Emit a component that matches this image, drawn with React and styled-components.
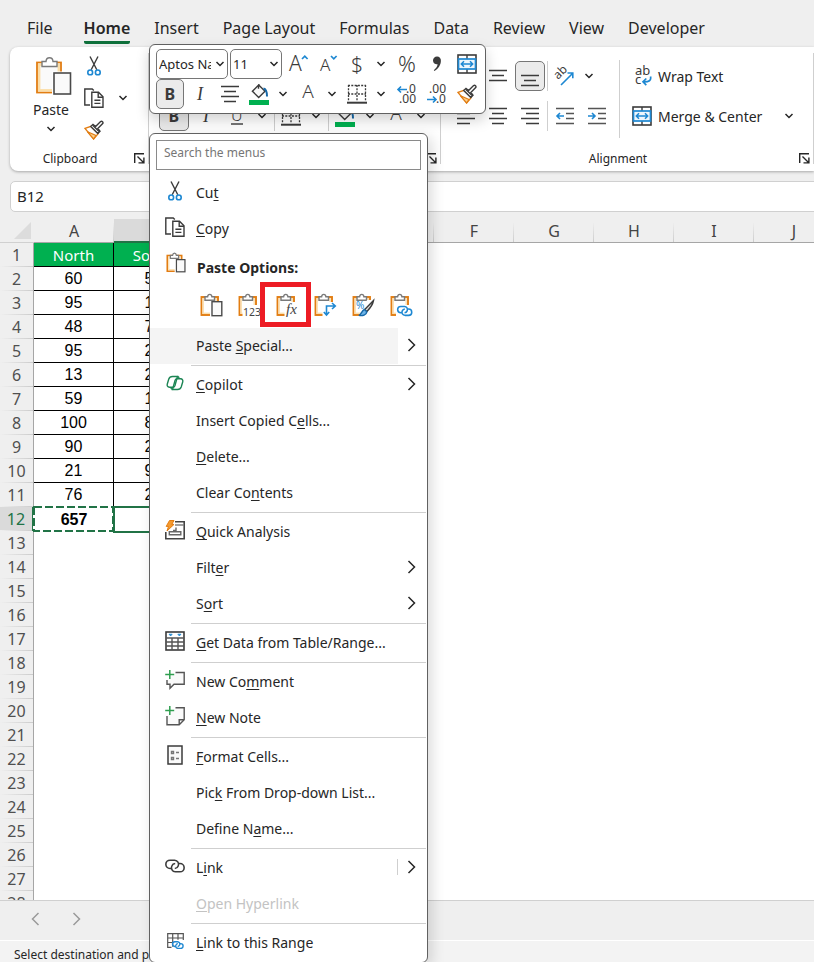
import React from "react";
import styled, { createGlobalStyle, css } from "styled-components";

const ink = "#3b3b3b";
const blue = "#1e88d2";
const orange = "#e27d12";
const green = "#217346";

const GlobalStyle = createGlobalStyle`
  * {
    box-sizing: border-box;
  }
  body {
    margin: 0;
    background: #efefef;
    font-family: "Noto Sans", "Open Sans", sans-serif;
    font-size: 14px;
    color: #262626;
  }
  button, input, select {
    font-family: inherit;
    font-size: inherit;
    color: inherit;
    margin: 0;
  }
  svg {
    display: block;
    flex: none;
  }
`;

const Page = styled.div`
  position: relative;
  display: flex;
  flex-direction: column;
  height: 100vh;
  overflow: hidden;
`;

/* ---------- tabs ---------- */

const TabBar = styled.nav`
  display: flex;
  gap: 24px;
  flex: none;
  height: 47px;
  padding: 12px 0 0 27px;
`;

const Tab = styled.button`
  height: 32px;
  padding: 3px 0 0;
  border: 0;
  border-bottom: 3px solid ${(p) => (p.$active ? "#0f703b" : "transparent")};
  border-radius: 2px;
  background: none;
  font-size: 16px;
  line-height: 26px;
  font-weight: ${(p) => (p.$active ? 600 : 400)};
  white-space: nowrap;
  margin-right: ${(p) => (p.$first ? "7px" : "0")};
`;

/* ---------- ribbon ---------- */

const Ribbon = styled.div`
  display: flex;
  flex: none;
  height: 124px;
  margin-left: 10px;
  background: #fff;
  border-radius: 8px 0 0 8px;
  box-shadow: 0 1px 3px rgba(0, 0, 0, 0.3);
`;

const Group = styled.section`
  display: flex;
  flex-direction: column;
  flex: ${(p) => (p.$grow ? "1" : "none")};
  width: ${(p) => p.$width || "auto"};
  position: relative;
  padding-top: 9px;

  &::after {
    content: "";
    position: absolute;
    right: 0;
    top: 6px;
    bottom: 7px;
    border-right: 1px solid #cfcfcf;
  }
`;

const GroupBody = styled.div`
  display: flex;
  flex: 1;
`;

const GroupFooter = styled.div`
  display: flex;
  align-items: center;
  height: 24px;
  margin-bottom: 1px;
  padding-right: 4px;
  font-size: 12px;

  span {
    flex: 1;
    padding-right: 4px;
    text-align: center;
  }
`;

const Launcher = styled.button`
  padding: 0;
  border: 0;
  background: none;
`;

const IconColumn = styled.div`
  display: flex;
  flex-direction: column;
  align-items: center;
  justify-content: space-between;
  width: ${(p) => p.$width}px;
  height: 84px;
`;

const PasteButton = styled.button`
  display: flex;
  flex-direction: column;
  align-items: center;
  width: 50px;
  margin-left: 16px;
  padding: 0;
  border: 0;
  background: none;
  line-height: 20px;

  span {
    margin: 4px 0 6px;
  }
`;

const ToolRows = styled.div`
  display: flex;
  flex-direction: column;
  padding: 0 7px 0 10px;
`;

const ToolRow = styled.div`
  display: flex;
  align-items: center;
  gap: 2px;
  height: 40px;
`;

const ToolButton = styled.button`
  display: flex;
  align-items: center;
  justify-content: center;
  flex: none;
  width: ${(p) => p.$width || 30}px;
  height: 30px;
  padding: 0;
  border: 1px solid ${(p) => (p.$on ? "#767676" : "transparent")};
  border-radius: 5px;
  background: ${(p) => (p.$on ? "#ebebeb" : "none")};
`;

const Arrow = styled(ToolButton)`
  width: 21px;
`;

const Split = styled.div`
  display: flex;
`;

const Rule = styled.i`
  width: 1px;
  height: ${(p) => p.$height || 30}px;
  background: #cfcfcf;
`;

const LabelButton = styled.button`
  display: flex;
  align-items: center;
  gap: 6px;
  height: 40px;
  padding: 0;
  border: 0;
  background: none;
  white-space: nowrap;
`;

const AlignSide = styled.div`
  display: flex;
  flex-direction: column;
  flex: 1;
  padding: 0 15px 0 12px;
`;

const AlignRow = styled.div`
  display: flex;
  justify-content: space-between;
  align-items: center;
`;

const RuleBox = styled.div`
  padding-top: 4px;
`;

/* ---------- formula bar ---------- */

const FormulaBar = styled.div`
  display: flex;
  flex: none;
  gap: 8px;
  height: 31px;
  margin: 10px 0 7px 10px;
`;

const BarInput = styled.input`
  flex: ${(p) => (p.$grow ? "1" : "none")};
  width: 170px;
  min-width: 0;
  padding: 0 6px 2px;
  border: 1px solid #d0d0d0;
  border-right-width: ${(p) => (p.$grow ? "0" : "1px")};
  border-radius: ${(p) => (p.$grow ? "5px 0 0 5px" : "5px")};
  background: #fff;
  font-size: 15px;
`;

/* ---------- sheet ---------- */

const SheetArea = styled.main`
  flex: 1;
  min-height: 0;
  overflow: hidden;
  background: linear-gradient(#efefef 24px, #fff 24px);
`;

const Sheet = styled.table`
  width: 834px;
  table-layout: fixed;
  border-collapse: separate;
  border-spacing: 0;
  font-size: 16px;
  line-height: 20px;

  th, td {
    height: 24px;
    padding: 0;
    text-align: center;
    font-weight: 400;
  }
  td {
    padding-top: 1px;
  }
  col:first-child {
    width: 34px;
  }
`;

const ColHead = styled.th`
  position: relative;
  color: #444;
  background: ${(p) => (p.$on ? "#dadada" : "#efefef")};
  border-bottom: ${(p) => (p.$on ? `2px solid ${green}` : "1px solid #a6a6a6")};

  &::after {
    content: "";
    position: absolute;
    right: 0;
    top: 3px;
    bottom: 0;
    width: 1px;
    background: linear-gradient(#efefef, #cccccc);
  }
`;

const Corner = styled.th`
  background: #efefef;
  border-bottom: 1px solid #d0d0d0;

  svg {
    margin-left: 14px;
  }
`;

const RowHead = styled.th`
  color: ${(p) => (p.$on ? green : "#505050")};
  background:
    linear-gradient(90deg, #efefef, #cccccc) bottom / 100% 1px no-repeat,
    ${(p) => (p.$on ? "#dadada" : "#efefef")};
  border-right: ${(p) => (p.$on ? `2px solid ${green}` : "1px solid #a6a6a6")};
`;

const Cell = styled.td`
  position: relative;
  color: #000;
  font-family: "Liberation Sans", Arial, sans-serif;

  ${(p) =>
    p.$filled &&
    css`
      border-right: 1px solid #000;
      border-bottom: 1px solid #000;
    `}
  ${(p) =>
    p.$title &&
    css`
      color: #fff;
      background: #00b050;
      font-family: inherit;
      font-size: 15px;
    `}
  ${(p) =>
    p.$total &&
    css`
      && {
        font-weight: 700;
      }
    `}
`;

const Marquee = styled.svg`
  position: absolute;
  left: 0;
  top: 0;
  overflow: visible;
`;

/* ---------- bottom bars ---------- */

const SheetNav = styled.div`
  display: flex;
  flex: none;
  align-items: center;
  gap: 32px;
  height: 40px;
  padding-left: 31px;
  padding-bottom: 4px;
  border-top: 1px solid #d0d0d0;
`;

const PlainButton = styled.button`
  padding: 0;
  border: 0;
  background: none;
`;

const StatusBar = styled.footer`
  flex: none;
  height: 22px;
  padding: 5px 14px 0;
  border-top: 1px solid #fff;
  background: #f3f3f3;
  font-size: 12px;
  line-height: 18px;
  white-space: nowrap;
`;

/* ---------- floating toolbar ---------- */

const MiniBar = styled.div`
  position: absolute;
  left: 149px;
  top: 44px;
  width: 337px;
  height: 70px;
  padding: 4px 6px;
  border: 1px solid #616161;
  border-radius: 6px;
  background: #fff;
  box-shadow: 0 6px 14px rgba(0, 0, 0, 0.18);
`;

const MiniRow = styled.div`
  display: flex;
  gap: 2px;
  height: 30px;
`;

const SelectBox = styled.label`
  position: relative;
  flex: none;
  width: ${(p) => p.$width}px;

  select {
    width: 100%;
    height: 30px;
    padding: 0 16px 0 2px;
    border: 1px solid #767676;
    border-radius: 5px;
    background: #fff;
    appearance: none;
    font-size: 13px;
  }
  svg {
    position: absolute;
    right: 3px;
    top: 12px;
    pointer-events: none;
  }
`;

/* ---------- context menu ---------- */

const Menu = styled.div`
  position: absolute;
  left: 149px;
  top: 133px;
  width: 279px;
  padding: 6px 0 1px;
  border: 1px solid #616161;
  border-radius: 6px;
  background: #fff;
  box-shadow: 4px 4px 14px rgba(0, 0, 0, 0.14);
`;

const Search = styled.input`
  display: block;
  width: calc(100% - 12px);
  height: 30px;
  margin: 0 6px 5px;
  padding: 0 7px 6px;
  border: 1px solid #8a8a8a;
  font-size: 12px;

  &::placeholder {
    color: #767676;
    opacity: 1;
  }
`;

const Item = styled.button`
  display: flex;
  align-items: center;
  width: 100%;
  height: 36px;
  padding: 0 11px 2px;
  border: 0;
  text-align: left;
  color: ${(p) => (p.disabled ? "#c3c3c3" : "inherit")};
  background: ${(p) =>
    p.$hover ? "linear-gradient(90deg, #f4f4f4 248px, #fff 248px)" : "none"};

  u {
    text-underline-offset: 2px;
    text-decoration-skip-ink: none;
  }
`;

const ItemIcon = styled.span`
  display: flex;
  align-items: center;
  justify-content: center;
  width: 28px;
  height: 26px;
  padding-bottom: 2px;
  margin-right: 7px;
`;

const ItemText = styled.span`
  flex: 1;
  white-space: nowrap;
`;

const ItemRule = styled.i`
  width: 1px;
  height: 16px;
  margin-right: 9px;
  background: #cfcfcf;
`;

const Separator = styled.hr`
  height: 1px;
  margin: 1px 1px 1px 41px;
  border: 0;
  background: #cfcfcf;
`;

const PasteHeading = styled.div`
  display: flex;
  height: 37px;
  padding: 3px 12px 0;
  font-weight: 700;
  line-height: 35px;
`;

const PasteOptions = styled.div`
  display: flex;
  height: 44px;
  padding-left: 42px;
`;

const PasteOption = styled.button`
  position: relative;
  display: flex;
  align-items: center;
  justify-content: center;
  width: 38px;
  padding: 0 0 2px;
  border: 0;
  background: none;
`;

const RedBox = styled.i`
  position: absolute;
  inset: -2px -5px 1px -8px;
  border: 5px solid #ed1c24;
`;

/* ---------- icons ---------- */

const Svg = ({ w = 20, h = 20, scale = 1, children }) => (
  <svg
    width={Math.round(w * scale)}
    height={Math.round(h * scale)}
    viewBox={`0 0 ${w} ${h}`}
    fill="none"
    stroke={ink}
    strokeWidth="1.4"
    aria-hidden="true"
  >
    {children}
  </svg>
);

const Glyph = ({ x, y, size, fill = ink, ...rest }) => (
  <text
    x={x}
    y={y}
    fontSize={size}
    fill={fill}
    stroke="none"
    fontFamily="Noto Sans, sans-serif"
    {...rest}
  />
);

const Down = () => (
  <Svg w={10} h={6}>
    <path d="M1.5 1l3.5 3.5L8.5 1" stroke="#262626" strokeWidth="1.5" />
  </Svg>
);

const Right = ({ color = "#262626" }) => (
  <Svg w={9} h={14}>
    <path d="M1.5 1l6 6-6 6" stroke={color} strokeWidth="1.5" />
  </Svg>
);

const Left = () => (
  <Svg w={9} h={14}>
    <path d="M7.5 1l-6 6 6 6" stroke="#9a9a9a" strokeWidth="1.5" />
  </Svg>
);

const LauncherIcon = () => (
  <Svg w={11} h={11}>
    <path d="M.7 10V.7H10M3.5 3.5l6 6M9.9 4.5v5.4H4.5" stroke="#262626" />
  </Svg>
);

const Cut = () => (
  <Svg w={14} h={20}>
    <path d="M3 .5l6.8 13.3M11 .5L4.2 13.8" />
    <circle cx="3.2" cy="16.4" r="2.4" stroke={blue} strokeWidth="1.6" />
    <circle cx="10.8" cy="16.4" r="2.4" stroke={blue} strokeWidth="1.6" />
  </Svg>
);

const Copy = () => (
  <Svg>
    <path d="M6 17H.8V1h7.4l1.6 1.6" />
    <path d="M7.8 4.2h6.7l4.5 4.6v10.4H7.8z" fill="#fff" />
    <path d="M14.2 4.2v5H19M10.4 12.3h6M10.4 15.4h6" />
  </Svg>
);

const Painter = () => (
  <Svg>
    <path d="M1 8.4l6-2 7.200 7.200-4.600 5.400z" fill="#fff" stroke={orange} />
    <path d="M3.500 11.800l8.500 3.700-2.400 3.300z" fill="#fbd28f" stroke={orange} strokeWidth="1.200" />
    <path d="M6.800 6.600L9 4.400l2.600 2.200 5-5c1.400-1 3 .6 2.100 2l-4.900 4.900 2.200 2.700-2.200 2.200z" fill="#fff" />
    <path d="M9 5.400l6 6" />
  </Svg>
);

const BigPaste = () => (
  <Svg w={42} h={40}>
    <g transform="translate(6 0)">
      <rect x="1" y="6.5" width="24" height="30" fill="#fafafa" stroke={orange} strokeWidth="1.8" />
      <rect x="3.200" y="8.700" width="19.600" height="25.600" stroke="#fbdda6" strokeWidth="2.400" />
      <path d="M6 10.500v-5h4c.3-5 6.700-5 7 0h4v5z" fill="#fff" stroke="#7a7a7a" />
      <rect x="16" y="15.500" width="20" height="24.500" fill="#fff" stroke="none" />
      <rect x="18" y="17" width="16.500" height="21" fill="#fafafa" stroke="#4a4a4a" strokeWidth="1.600" />
    </g>
  </Svg>
);

const Board = ({ children, scale, cut = "M10 9h13v15H10z" }) => (
  <Svg w={23} h={24} scale={scale}>
    <rect x="1.5" y="4" width="16.500" height="18" fill="#fff" stroke={orange} strokeWidth="1.900" />
    <rect x="3.200" y="5.700" width="13" height="14.600" stroke="#fbdfaf" strokeWidth="1.400" />
    <path d="M5 7.300V3.800h2.600c.3-3.300 4-3.300 4.300 0h2.600v3.500z" fill="#fff" stroke="#7a7a7a" />
    <path d={cut} fill="#fff" stroke="none" />
    {children}
  </Svg>
);

const PasteAll = ({ scale }) => (
  <Board scale={scale}>
    <rect x="12" y="8.700" width="9.800" height="14" fill="#fafafa" stroke="#4a4a4a" />
  </Board>
);

const PasteValues = () => (
  <Board cut="M4.500 12H23v12H4.500z">
    <Glyph x="5" y="23" size="10.500" fill="#444">123</Glyph>
  </Board>
);

const PasteFormulas = () => (
  <Board cut="M8.500 9H23v15H8.500z">
    <Glyph x="10" y="20.500" size="15" fill="#444" fontFamily="Liberation Serif, serif" fontStyle="italic">fx</Glyph>
  </Board>
);

const PasteTranspose = () => (
  <Board cut="M8.500 9H23v15H8.500z">
    <path d="M12.500 21.500V13h8M18 10l3.300 3-3.300 3M9.800 19l2.700 3 2.700-3" stroke={blue} strokeWidth="1.600" />
  </Board>
);

const PasteFormatting = () => (
  <Board cut="M15 7h8v17H9z">
    <Glyph x="4" y="16" size="10" fill={blue}>%</Glyph>
    <path d="M21.500 7.500l-8.800 9 2 2.200c3-3 6-7 6.800-11.200z" fill="#ddd" />
    <path d="M12.500 16.500l2.300 2.300c-.5 3.500-4 4.200-8 3.600 3-.8 2.400-4.900 5.700-5.900z" fill="#6db4e8" stroke="#1668a8" />
  </Board>
);

// two open loops, the second is the first one turned by 180 degrees
const chain =
  "M6.500 9.500H5A4.100 4.100 0 015 1.200h4.700a4.100 4.100 0 013.500 5.800c-.6 1.500-1.800 2.400-3.400 2.500" +
  "M13.500 4.500H15a4.100 4.100 0 010 8.300h-4.700a4.100 4.100 0 01-3.500-5.800c.6-1.500 1.800-2.400 3.400-2.500";

const PasteLink = () => (
  <Board cut="M6 12h17v12H6z">
    <g transform="translate(7 12.5) scale(.77)">
      <path d={chain} stroke={blue} strokeWidth="2" />
    </g>
  </Board>
);

const Copilot = () => (
  <Svg w={18} h={16}>
    <path d="M6.500 1.500h5l-2.600 9.300c-.4 1-1 1.400-2 1.400H3.500C1.500 12.200.8 10.600 1.300 9l1.500-5c.6-1.800 1.700-2.500 3.700-2.500z" stroke="#1c8554" />
    <path d="M11.500 14.500h-5l2.600-9.300c.4-1 1-1.400 2-1.400h3.400c2 0 2.700 1.600 2.200 3.200l-1.500 5c-.6 1.800-1.700 2.500-3.700 2.500z" stroke="#1c8554" />
    <path d="M11.500 1.500c1 0 1.500.7 1.800 2.300M6.500 14.500c-1 0-1.500-.7-1.800-2.300" stroke="#1c8554" />
  </Svg>
);

const Analysis = () => (
  <Svg>
    <path d="M10 1.800h9.200v16.900H.8V12" stroke="#444" strokeWidth="1.600" />
    <path d="M10 5h9" stroke="#777" />
    <path d="M8 10.500h3V7.500M11 7.500v4.300h4.800v2.900H4.300v-2.900H11" stroke="#666" />
    <path d="M4.500.5H9L6.800 4.400H9L2 11l1.500-4.600H1.200z" fill="#f59a2f" stroke={orange} strokeWidth="1" />
  </Svg>
);

const TableIcon = () => (
  <Svg>
    <rect x="1" y="1" width="18" height="18" fill="#fff" strokeWidth="1.600" />
    <path d="M1 7h18M1 11h18M1 15h18M7 7v12M13 7v12" stroke="#555" />
    <path d="M4 3.200h3.200L5.600 5zM12.800 3.200H16L14.400 5z" fill={blue} stroke={blue} strokeWidth=".8" />
  </Svg>
);

const Comment = () => (
  <Svg>
    <path d="M10.500 2.500h8.700v11.700H9l-4 4v-4H2V10" fill="#fafafa" stroke="#555" />
    <path d="M4.800 0v9M.2 4.500h9" stroke="#2f9e4f" strokeWidth="1.500" />
  </Svg>
);

const Note = () => (
  <Svg>
    <path d="M10.500 1.800h8.700v12l-5 5H2V10" fill="#fafafa" stroke="#555" />
    <path d="M14.200 18.500v-4.800h4.800" stroke="#555" />
    <path d="M4.800 0v9M.2 4.500h9" stroke="#2f9e4f" strokeWidth="1.500" />
  </Svg>
);

const Format = () => (
  <Svg w={16} h={20}>
    <rect x="1" y="1" width="14" height="18" fill="#fafafa" strokeWidth="1.500" />
    <path d="M4.500 6.500h2v2h-2zM4.500 12.500h2v2h-2zM9 7.500h3M9 13.500h3" stroke="#777" />
  </Svg>
);

const LinkIcon = () => (
  <Svg w={20} h={14}>
    <path d={chain} strokeWidth="1.600" />
  </Svg>
);

const RangeLink = () => (
  <Svg w={17} h={16}>
    <path d="M4.500 14.300H.7V.7h15.600V7M.7 5h15.600M.7 9.500h5M5.700.7v13M11 .7v6" stroke="#555" strokeWidth="1.200" />
    <g transform="translate(5 8) scale(.58)">
      <path d={chain} stroke={blue} strokeWidth="2.400" />
    </g>
  </Svg>
);

const Lines = ({ rows, w = 20, h = 20 }) => (
  <Svg w={w} h={h}>
    {rows.map(([x1, x2, y]) => (
      <path key={y} d={`M${x1} ${y}H${x2}`} strokeWidth="1.500" />
    ))}
  </Svg>
);

const topLines = [[1, 19, 1.5], [4, 16, 6.5], [1, 19, 11.5]];
const middleLines = [[1, 19, 4.5], [4, 16, 9.5], [1, 19, 14.5]];
const bottomLines = [[1, 19, 11.5], [4, 16, 16.5], [1, 19, 21.5]];
const centerLines = [[1, 19, 2.5], [4, 16, 7.5], [1, 19, 12.5], [4, 16, 17.5]];
const leftLines = [[1, 19, 2.5], [1, 14, 7.5], [1, 19, 12.5], [1, 14, 17.5]];
const rightLines = [[1, 19, 2.5], [6, 19, 7.5], [1, 19, 12.5], [6, 19, 17.5]];

const Indent = ({ inward }) => (
  <Svg>
    <path d="M1 2.500h18M11 7.500h8M11 12.500h8M1 17.500h18" strokeWidth="1.500" stroke="#555" />
    <path d={inward ? "M1 10h7M5 7l3 3-3 3" : "M9 10H2M5 7l-3 3 3 3"} stroke={blue} strokeWidth="1.600" />
  </Svg>
);

const Bold = () => (
  <Svg>
    <Glyph x="4.500" y="15.500" size="16" fontWeight="700">B</Glyph>
  </Svg>
);

const Italic = () => (
  <Svg>
    <Glyph x="7" y="15.500" size="18" fontFamily="Liberation Serif, serif" fontStyle="italic">I</Glyph>
  </Svg>
);

const Underline = () => (
  <Svg>
    <Glyph x="4" y="15" size="16" fontWeight="300">U</Glyph>
    <path d="M4 18h12" />
  </Svg>
);

const Fill = () => (
  <Svg h={22}>
    <path d="M9.500 1.800l6.500 6.500-6.300 6.200-6.300-6.200 6.500-6.500V1M9.500 1.800v4" fill="#fafafa" />
    <path d="M14.500 5.500c2.600.5 3.500 3 3.500 8" stroke="#1668a8" strokeWidth="2" />
    <rect x="0" y="17" width="20" height="5" fill="#00b050" stroke="none" />
  </Svg>
);

const FontColor = () => (
  <Svg h={22}>
    <Glyph x="10" y="15" size="19" fontWeight="300" textAnchor="middle">A</Glyph>
  </Svg>
);

const Borders = () => (
  <Svg>
    <path d="M1 1.500h18M1 10h18M1.500 1v16M10 1v16M18.500 1v16" strokeDasharray="2 1.300" strokeWidth="1.300" />
    <path d="M0 18.700h20" strokeWidth="2" />
  </Svg>
);

const FontUp = ({ small }) => (
  <Svg w={22} h={22}>
    <Glyph x={small ? 3 : 2} y="18" size={small ? 17 : 21} fontWeight="300">A</Glyph>
    <path d={small ? "M14 3l2.800 2.800L19.600 3" : "M15 6l2.800-2.800L20.600 6"} stroke={blue} strokeWidth="1.700" />
  </Svg>
);

const Sign = ({ children, size = 22 }) => (
  <Svg w={24} h={24}>
    <Glyph x="12" y="19.500" size={size} fontWeight="300" textAnchor="middle">{children}</Glyph>
  </Svg>
);

const Comma = () => (
  <Svg w={12} h={18}>
    <path d="M6 1.500a3.800 3.800 0 013.900 4.200c0 4-2.400 7.800-6.400 10.300l-.7-.8c2.200-1.900 3.500-3.700 3.800-6A3.700 3.700 0 012 5.600 4 4 0 016 1.500z" fill={ink} stroke="none" />
  </Svg>
);

const Merge = () => (
  <Svg>
    <rect x="1" y="1" width="18" height="18" strokeWidth="1.600" />
    <path d="M10 1v4M10 15v4" />
    <rect x="1.500" y="5" width="17" height="10" fill="#eef6fc" stroke={blue} strokeWidth="1.700" />
    <path d="M4.500 10h11M7 7.200L4.300 10 7 12.800M13 7.200l2.700 2.800-2.700 2.800" stroke={blue} strokeWidth="1.500" />
  </Svg>
);

const Decimals = ({ less }) => (
  <Svg w={22} h={22}>
    <Glyph size="12" textAnchor="end">
      <tspan x="20" y="10">{less ? ".00" : ".0"}</tspan>
      <tspan x="20" y="20">{less ? ".0" : ".00"}</tspan>
    </Glyph>
    <path
      d={less ? "M1 16.500h9M7 13.500l3 3-3 3" : "M11 6.500H2M5 3.500l-3 3 3 3"}
      stroke={blue}
      strokeWidth="1.600"
    />
  </Svg>
);

const Orientation = () => (
  <Svg w={22} h={22}>
    <Glyph x="0" y="0" size="12" transform="translate(5 15) rotate(-45)">ab</Glyph>
    <path d="M8 20L19.500 8.500M14.500 8h5.300v5.300" stroke={blue} strokeWidth="1.600" />
  </Svg>
);

const Wrap = () => (
  <Svg w={20} h={22}>
    <Glyph size="13">
      <tspan x="3" y="10">ab</tspan>
      <tspan x="3" y="19">c</tspan>
    </Glyph>
    <path d="M18.500 11.500c1 4-1.500 5.500-7 5.300M14.300 13.500L11 16.800l3.300 3.300" stroke={blue} strokeWidth="1.700" />
  </Svg>
);

/* ---------- data ---------- */

const tabs = ["File", "Home", "Insert", "Page Layout", "Formulas", "Data", "Review", "View", "Developer"];
const columns = ["A", "B", "C", "D", "E", "F", "G", "H", "I", "J"];

const rows = [
  ["North", "South"],
  ["60", "50"],
  ["95", "16"],
  ["48", "74"],
  ["95", "23"],
  ["13", "28"],
  ["59", "17"],
  ["100", "83"],
  ["90", "22"],
  ["21", "96"],
  ["76", "25"],
  ["657", ""],
];

// & marks the access key, "-" is a separator
const menuItems = [
  { label: "&Copilot", icon: <Copilot />, more: true },
  { label: "Insert Copied C&ells..." },
  { label: "&Delete..." },
  { label: "Clear Co&ntents" },
  "-",
  { label: "&Quick Analysis", icon: <Analysis /> },
  { label: "Filt&er", more: true },
  { label: "S&ort", more: true },
  "-",
  { label: "&Get Data from Table/Range...", icon: <TableIcon /> },
  "-",
  { label: "New Co&mment", icon: <Comment /> },
  { label: "&New Note", icon: <Note /> },
  "-",
  { label: "&Format Cells...", icon: <Format /> },
  { label: "Pic&k From Drop-down List..." },
  { label: "Define N&ame..." },
  "-",
  { label: "L&ink", icon: <LinkIcon />, more: true, rule: true },
  { label: "&Open Hyperlink", disabled: true },
  "-",
  { label: "&Link to this Range", icon: <RangeLink /> },
];

const pasteOptions = [
  { name: "Paste", icon: <PasteAll /> },
  { name: "Values", icon: <PasteValues /> },
  { name: "Formulas", icon: <PasteFormulas />, marked: true },
  { name: "Transpose", icon: <PasteTranspose /> },
  { name: "Formatting", icon: <PasteFormatting /> },
  { name: "Paste Link", icon: <PasteLink /> },
];

const AccessLabel = ({ text }) => {
  const at = text.indexOf("&");
  return (
    <ItemText>
      {text.slice(0, at === -1 ? text.length : at)}
      {at !== -1 && <u>{text[at + 1]}</u>}
      {at !== -1 && text.slice(at + 2)}
    </ItemText>
  );
};

const MenuItem = ({ label, icon, more, rule, hover, disabled }) => (
  <Item role="menuitem" $hover={hover} disabled={disabled}>
    <ItemIcon>{icon}</ItemIcon>
    <AccessLabel text={label} />
    {rule && <ItemRule />}
    {more && <Right />}
  </Item>
);

const SplitTool = ({ icon, name, width = 26 }) => (
  <Split>
    <ToolButton $width={width} aria-label={name}>{icon}</ToolButton>
    <Arrow aria-label={`${name} options`}><Down /></Arrow>
  </Split>
);

const ContextMenu = () => (
  <Menu role="menu">
    <Search type="text" aria-label="Search the menus" placeholder="Search the menus" />
    <MenuItem label="Cu&t" icon={<Cut />} />
    <MenuItem label="&Copy" icon={<Copy />} />
    <PasteHeading>
      <ItemIcon><PasteAll scale={0.87} /></ItemIcon>
      Paste Options:
    </PasteHeading>
    <PasteOptions>
      {pasteOptions.map((o) => (
        <PasteOption key={o.name} aria-label={o.name}>
          {o.icon}
          {o.marked && <RedBox />}
        </PasteOption>
      ))}
    </PasteOptions>
    <MenuItem label="Paste &Special..." hover more />
    <Separator />
    {menuItems.map((item, i) =>
      item === "-" ? <Separator key={i} /> : <MenuItem key={i} {...item} />
    )}
  </Menu>
);

const MiniToolbar = () => (
  <MiniBar>
    <MiniRow>
      <SelectBox $width={72}>
        <select aria-label="Font"><option>Aptos Narrow</option></select>
        <Down />
      </SelectBox>
      <SelectBox $width={52}>
        <select aria-label="Font size"><option>11</option></select>
        <Down />
      </SelectBox>
      <ToolButton $width={28} aria-label="Increase font size"><FontUp /></ToolButton>
      <ToolButton $width={28} aria-label="Decrease font size"><FontUp small /></ToolButton>
      <SplitTool name="Currency" icon={<Sign size={21}>$</Sign>} />
      <ToolButton $width={28} aria-label="Percent"><Sign>%</Sign></ToolButton>
      <ToolButton $width={28} aria-label="Comma style"><Comma /></ToolButton>
      <ToolButton $width={28} aria-label="Merge"><Merge /></ToolButton>
    </MiniRow>
    <MiniRow>
      <ToolButton $width={28} $on aria-label="Bold"><Bold /></ToolButton>
      <ToolButton $width={28} aria-label="Italic"><Italic /></ToolButton>
      <ToolButton $width={28} aria-label="Center"><Lines rows={centerLines} /></ToolButton>
      <SplitTool name="Fill" icon={<Fill />} />
      <SplitTool name="Font color" icon={<FontColor />} />
      <SplitTool name="Borders" icon={<Borders />} />
      <ToolButton $width={28} aria-label="More decimals"><Decimals /></ToolButton>
      <ToolButton $width={28} aria-label="Fewer decimals"><Decimals less /></ToolButton>
      <ToolButton $width={28} aria-label="Format painter"><Painter /></ToolButton>
    </MiniRow>
  </MiniBar>
);

const RibbonBar = () => (
  <Ribbon>
    <Group $width="139px">
      <GroupBody>
        <PasteButton>
          <BigPaste />
          <span>Paste</span>
          <Down />
        </PasteButton>
        <IconColumn $width={36}>
          <Cut />
          <Copy />
          <Painter />
        </IconColumn>
        <IconColumn $width={22}>
          <i />
          <Down />
          <i />
        </IconColumn>
      </GroupBody>
      <GroupFooter>
        <span>Clipboard</span>
        <Launcher aria-label="Clipboard settings"><LauncherIcon /></Launcher>
      </GroupFooter>
    </Group>
    <Group $width="292px">
      <GroupBody>
        <ToolRows>
          <ToolRow />
          <ToolRow>
            <ToolButton $on aria-label="Bold"><Bold /></ToolButton>
            <ToolButton aria-label="Italic"><Italic /></ToolButton>
            <SplitTool name="Underline" width={28} icon={<Underline />} />
            <Rule />
            <SplitTool name="Borders" width={28} icon={<Borders />} />
            <Rule />
            <SplitTool name="Fill" width={28} icon={<Fill />} />
            <SplitTool name="Font color" width={28} icon={<FontColor />} />
          </ToolRow>
        </ToolRows>
      </GroupBody>
      <GroupFooter>
        <span>Font</span>
        <Launcher aria-label="Font settings"><LauncherIcon /></Launcher>
      </GroupFooter>
    </Group>
    <Group $grow>
      <GroupBody>
        <ToolRows>
          <ToolRow>
            <ToolButton aria-label="Top align"><Lines rows={topLines} /></ToolButton>
            <ToolButton aria-label="Middle align"><Lines rows={middleLines} /></ToolButton>
            <ToolButton $on aria-label="Bottom align"><Lines rows={bottomLines} h={24} /></ToolButton>
            <Rule />
            <SplitTool name="Orientation" width={28} icon={<Orientation />} />
          </ToolRow>
          <ToolRow>
            <ToolButton aria-label="Align left"><Lines rows={leftLines} /></ToolButton>
            <ToolButton aria-label="Center"><Lines rows={centerLines} /></ToolButton>
            <ToolButton aria-label="Align right"><Lines rows={rightLines} /></ToolButton>
            <Rule />
            <ToolButton aria-label="Decrease indent"><Indent /></ToolButton>
            <ToolButton aria-label="Increase indent"><Indent inward /></ToolButton>
          </ToolRow>
        </ToolRows>
        <RuleBox><Rule as="div" $height={78} /></RuleBox>
        <AlignSide>
          <LabelButton><Wrap />Wrap Text</LabelButton>
          <AlignRow>
            <LabelButton><Merge />Merge &amp; Center</LabelButton>
            <Arrow aria-label="Merge options"><Down /></Arrow>
          </AlignRow>
        </AlignSide>
      </GroupBody>
      <GroupFooter>
        <span>Alignment</span>
        <Launcher aria-label="Alignment settings"><LauncherIcon /></Launcher>
      </GroupFooter>
    </Group>
  </Ribbon>
);

const Grid = () => (
  <SheetArea>
    <Sheet>
      <colgroup>
        <col />
        {columns.map((c) => <col key={c} />)}
      </colgroup>
      <thead>
        <tr>
          <Corner>
            <svg width="17" height="17" aria-hidden="true"><path d="M17 0v17H0z" fill="#dcdcdc" /></svg>
          </Corner>
          {columns.map((c) => <ColHead key={c} $on={c === "B"}>{c}</ColHead>)}
        </tr>
      </thead>
      <tbody>
        {Array.from({ length: 28 }, (_, r) => (
          <tr key={r}>
            <RowHead $on={r === 11}>{r + 1}</RowHead>
            {columns.map((c, i) => (
              <Cell
                key={c}
                $filled={r < 11 && i < 2}
                $title={r === 0 && i < 2}
                $total={r === 11}
              >
                {rows[r] && rows[r][i]}
                {r === 11 && i === 1 && (
                  <Marquee width="80" height="24">
                    <rect x="0" y="0" width="80" height="25" fill="none" stroke={green} strokeWidth="2" />
                  </Marquee>
                )}
                {r === 11 && i === 0 && (
                  <Marquee width="80" height="24">
                    <rect x="0" y="0" width="79" height="24" fill="none" stroke="#fff" strokeWidth="2" />
                    <rect x="0" y="0" width="79" height="24" fill="none" stroke={green} strokeWidth="2" strokeDasharray="8 3" />
                  </Marquee>
                )}
              </Cell>
            ))}
          </tr>
        ))}
      </tbody>
    </Sheet>
  </SheetArea>
);

const App = () => {
  return (
    <>
      <GlobalStyle />
      <Page>
        <TabBar>
          {tabs.map((t) => (
            <Tab key={t} $active={t === "Home"} $first={t === "File"}>{t}</Tab>
          ))}
        </TabBar>
        <RibbonBar />
        <FormulaBar>
          <BarInput aria-label="Name box" defaultValue="B12" />
          <BarInput aria-label="Formula" $grow />
        </FormulaBar>
        <Grid />
        <SheetNav>
          <PlainButton aria-label="Previous sheet"><Left /></PlainButton>
          <PlainButton aria-label="Next sheet"><Right color="#9a9a9a" /></PlainButton>
        </SheetNav>
        <StatusBar>Select destination and press ENTER or choose Paste</StatusBar>
        <MiniToolbar />
        <ContextMenu />
      </Page>
    </>
  );
};

export default App;
